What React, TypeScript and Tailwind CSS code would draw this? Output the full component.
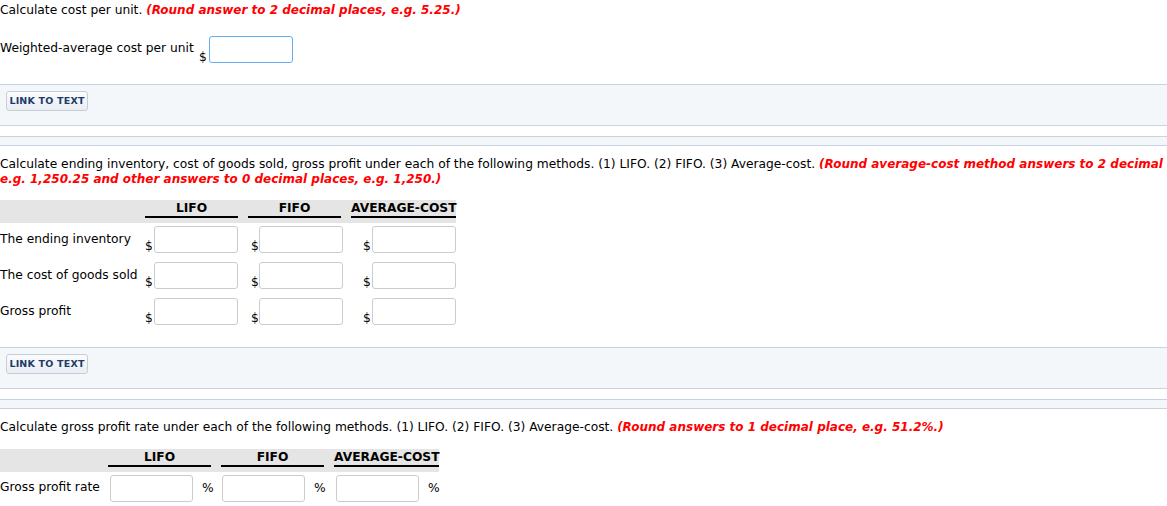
const font = { fontFamily: '"DejaVu Sans", Verdana, sans-serif' };

function LinkBand() {
  return (
    <>
      <div className="h-[42px] border-y border-[#c8d3df] bg-[#f4f7fa] px-[6px] pt-[6px]">
        <button className="h-[20px] w-[82px] rounded-[3px] border border-[#c5ced8] bg-gradient-to-b from-[#fbfcfd] to-[#e9eef3] text-[9.5px] font-bold tracking-[0.2px] text-[#1e3a6a]">
          LINK TO TEXT
        </button>
      </div>
      <div className="mt-[10px] h-[10px] border-y border-[#c8d3df] bg-[#f4f7fa]" />
    </>
  );
}

function Box({ blue = false, w = 'w-[84px]' }: { blue?: boolean; w?: string }) {
  return (
    <input
      className={`${w} h-[27px] rounded-[3px] border bg-white ${
        blue ? 'border-[#62aef0]' : 'border-[#cccccc]'
      }`}
    />
  );
}

function Money() {
  return (
    <div className="flex items-end justify-between">
      <span className="mb-[-1px] leading-[16px]">$</span>
      <Box />
    </div>
  );
}

function Head({ cols, width }: { cols: string; width: string }) {
  return (
    <div className={`grid h-[23px] ${cols} ${width} bg-[#e5e5e5] pt-[1px]`}>
      <div />
      <div className="h-[17px] border-b-2 border-black text-center font-bold leading-[14px]">LIFO</div>
      <div />
      <div className="h-[17px] border-b-2 border-black text-center font-bold leading-[14px]">FIFO</div>
      <div />
      <div className="h-[17px] border-b-2 border-black text-center font-bold leading-[14px] whitespace-nowrap">
        AVERAGE-COST
      </div>
    </div>
  );
}

const rows = ['The ending inventory', 'The cost of goods sold', 'Gross profit'];

export default function App() {
  return (
    <div className="w-full overflow-hidden bg-white text-[12.25px] text-black" style={font}>
      <div className="pt-[2px] leading-[16px] whitespace-nowrap">
        Calculate cost per unit.{' '}
        <span className="text-[12px] font-bold italic text-[#ff0000]">
          (Round answer to 2 decimal places, e.g. 5.25.)
        </span>
      </div>

      <div className="mt-[18px] flex items-start">
        <div className="mt-[4px] w-[199px] leading-[16px]">Weighted-average cost per unit</div>
        <div className="flex items-end gap-[2px]">
          <span className="mb-[-2px] leading-[16px]">$</span>
          <Box blue />
        </div>
      </div>

      <div className="mt-[21px]">
        <LinkBand />
      </div>

      <div className="mt-[11px] leading-[15px] whitespace-nowrap">
        Calculate ending inventory, cost of goods sold, gross profit under each of the following methods. (1) LIFO. (2)
        FIFO. (3) Average-cost.{' '}
        <span className="text-[12px] font-bold italic text-[#ff0000]">
          (Round average-cost method answers to 2 decimal places,
          <br />
          e.g. 1,250.25 and other answers to 0 decimal places, e.g. 1,250.)
        </span>
      </div>

      <div className="mt-[13px]">
        <Head cols="grid-cols-[145px_93px_10px_93px_10px_105px]" width="w-[456px]" />
        <div className="flex flex-col gap-[9px] pt-[3px]">
          {rows.map((r) => (
            <div key={r} className="grid w-[456px] grid-cols-[145px_93px_10px_93px_10px_105px]">
              <div className="mt-[5px] leading-[16px]">{r}</div>
              <Money />
              <div />
              <div className="pl-[3px]">
                <Money />
              </div>
              <div />
              <div className="pl-[12px]">
                <Money />
              </div>
            </div>
          ))}
        </div>
      </div>

      <div className="mt-[22px]">
        <LinkBand />
      </div>

      <div className="mt-[11px] leading-[15px] whitespace-nowrap">
        Calculate gross profit rate under each of the following methods. (1) LIFO. (2) FIFO. (3) Average-cost.{' '}
        <span className="text-[12px] font-bold italic text-[#ff0000]">
          (Round answers to 1 decimal place, e.g. 51.2%.)
        </span>
      </div>

      <div className="mt-[14px]">
        <Head cols="grid-cols-[108px_103px_10px_103px_10px_105px]" width="w-[439px]" />
        <div className="grid w-[439px] grid-cols-[108px_103px_10px_103px_10px_105px] pt-[3px]">
          <div className="mt-[4px] leading-[16px]">Gross profit rate</div>
          <div className="flex items-start gap-[9px] pl-[2px]">
            <Box w="w-[83px]" />
            <span className="mt-[5px] leading-[16px]">%</span>
          </div>
          <div />
          <div className="flex items-start gap-[9px] pl-[1px]">
            <Box w="w-[83px]" />
            <span className="mt-[5px] leading-[16px]">%</span>
          </div>
          <div />
          <div className="flex items-start gap-[9px] pl-[2px]">
            <Box w="w-[83px]" />
            <span className="mt-[5px] leading-[16px]">%</span>
          </div>
        </div>
      </div>
    </div>
  );
}
